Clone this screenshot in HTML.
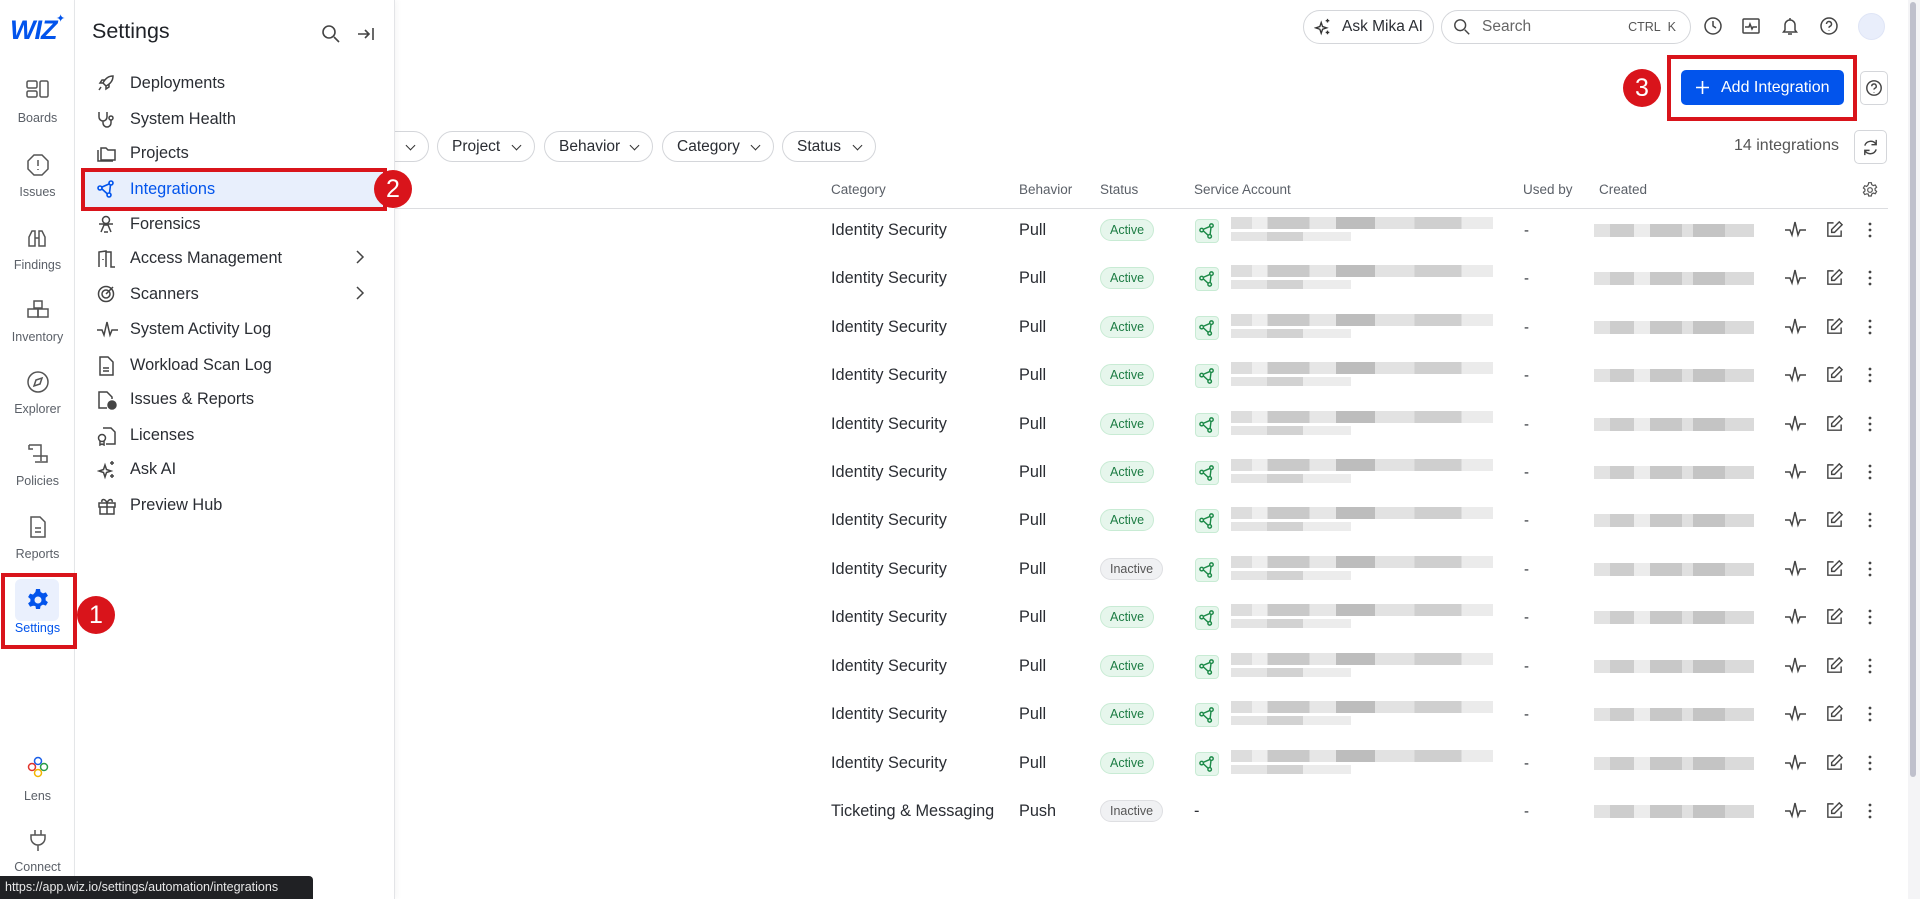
<!DOCTYPE html>
<html><head><meta charset="utf-8">
<style>
*{box-sizing:border-box;margin:0;padding:0}
body{width:1920px;height:899px;overflow:hidden;background:#fff;font-family:"Liberation Sans",sans-serif;color:#2a2d33;position:relative}
.abs{position:absolute}
.rail{left:0;top:0;width:75px;height:899px;border-right:1px solid #e6e7ea;background:#fff;z-index:5}
.ri{position:absolute;left:0;width:75px;text-align:center;font-size:12.5px;color:#5b6068}
.ri svg{display:block;margin:0 auto}
.panel{left:75px;top:0;width:320px;height:899px;background:#fff;border-right:1px solid #e3e4e7;box-shadow:2px 0 6px rgba(0,0,0,.04);z-index:5}
.mi{position:absolute;left:0;width:310px;height:36px;font-size:16.3px;color:#2a2d33;display:flex;align-items:center}
.mi svg{position:absolute;left:22px;top:9px}
.mi span{position:absolute;left:55px}
.chev{position:absolute;right:20px;top:9px}
.badge{position:absolute;width:38px;height:38px;border-radius:50%;background:#d9141b;color:#fff;font-size:25px;text-align:center;line-height:38px;font-family:"Liberation Sans",sans-serif;z-index:7}
.redbox{position:absolute;border:4px solid #d9141b;z-index:6}
.chip{position:absolute;top:131px;height:31px;border:1px solid #d4d6da;border-radius:16px;font-size:15.5px;line-height:29px;padding-left:14px;color:#2a2d33;background:#fff}
.chip:after{content:"";position:absolute;right:14px;top:10px;width:6px;height:6px;border-right:1.6px solid #333;border-bottom:1.6px solid #333;transform:rotate(45deg)}
.th{position:absolute;top:182px;font-size:13.5px;color:#5b6068}
.row{position:absolute;left:394px;width:1500px;height:48px}
.row .c{position:absolute;top:14px;font-size:16.3px;color:#2a2d33}
.pill{position:absolute;top:12px;height:22px;border-radius:11px;font-size:12.5px;line-height:20px;padding:0 9px}
.act{background:#e6f6ec;border:1px solid #c8ebd4;color:#1c7c43}
.ina{background:#f0f1f3;border:1px solid #dedfe2;color:#555}
.sa{position:absolute;left:801px;top:12px;width:24px;height:24px;border-radius:4px;background:#e6f6ec;border:1px solid #c8ebd4}
.bl1{position:absolute;left:837px;top:10px;width:262px;height:12px;background:linear-gradient(90deg,#ddd 0 8%,#eee 8% 14%,#c9c9c9 14% 30%,#e6e6e6 30% 40%,#bdbdbd 40% 55%,#e2e2e2 55% 70%,#cfcfcf 70% 88%,#ebebeb 88%)}
.bl2{position:absolute;left:837px;top:25px;width:120px;height:9px;background:linear-gradient(90deg,#e4e4e4 0 30%,#d2d2d2 30% 60%,#ececec 60%)}
.cr{position:absolute;left:1200px;top:17px;width:160px;height:13px;background:linear-gradient(90deg,#e2e2e2 0 10%,#cdcdcd 10% 25%,#ececec 25% 35%,#c8c8c8 35% 55%,#e0e0e0 55% 62%,#c4c4c4 62% 82%,#dadada 82%)}
.dash{position:absolute;left:1130px;top:15px;font-size:15px}
.ac{position:absolute;top:13px}
</style></head><body>

<!-- left rail -->
<div class="abs rail">
 <div class="abs" style="left:10px;top:15px;font-size:27px;font-weight:bold;color:#0254ec;font-style:italic;letter-spacing:-1px">WIZ</div>
 <div class="abs" style="left:56px;top:12px;font-size:11px;color:#0254ec">✦</div>
 <div class="ri" style="top:79px"><svg width="24" height="22" viewBox="0 0 24 22" fill="none" stroke="#555" stroke-width="1.5"><rect x="1" y="2" width="10" height="7" rx="1.5"/><rect x="1" y="12" width="10" height="6" rx="1.5"/><rect x="14" y="2" width="8" height="16" rx="1.5"/></svg><div style="margin-top:10px">Boards</div></div>
 <div class="ri" style="top:153px"><svg width="24" height="24" viewBox="0 0 24 24" fill="none" stroke="#555" stroke-width="1.5"><path d="M8 2h8l6 6v8l-6 6H8l-6-6V8z"/><path d="M12 7v6M12 16v1"/></svg><div style="margin-top:8px">Issues</div></div>
 <div class="ri" style="top:226px"><svg width="24" height="24" viewBox="0 0 24 24" fill="none" stroke="#555" stroke-width="1.5"><path d="M3 20V11l3-6h3v15zM13 20V5h3l3 6v9zM9 12h4"/></svg><div style="margin-top:8px">Findings</div></div>
 <div class="ri" style="top:298px"><svg width="24" height="24" viewBox="0 0 24 24" fill="none" stroke="#555" stroke-width="1.5"><rect x="8" y="3" width="8" height="7"/><rect x="2" y="11" width="10" height="8"/><rect x="12" y="11" width="10" height="8"/></svg><div style="margin-top:8px">Inventory</div></div>
 <div class="ri" style="top:370px"><svg width="24" height="24" viewBox="0 0 24 24" fill="none" stroke="#555" stroke-width="1.5"><circle cx="12" cy="12" r="10"/><path d="M16 8l-2 6-6 2 2-6z"/></svg><div style="margin-top:8px">Explorer</div></div>
 <div class="ri" style="top:442px"><svg width="24" height="24" viewBox="0 0 24 24" fill="none" stroke="#555" stroke-width="1.5"><path d="M3 3h12v16M3 3v4h4M7 14h14v6H9"/></svg><div style="margin-top:8px">Policies</div></div>
 <div class="ri" style="top:515px"><svg width="24" height="24" viewBox="0 0 24 24" fill="none" stroke="#555" stroke-width="1.5"><path d="M5 2h9l5 5v15H5z"/><path d="M9 13h6M9 17h6"/></svg><div style="margin-top:8px">Reports</div></div>
 <div class="abs" style="left:15px;top:579px;width:44px;height:42px;border-radius:6px;background:#eaf0fd"></div>
 <div class="ri" style="top:588px;color:#0254ec"><svg width="24" height="24" viewBox="0 0 24 24"><path fill="#0254ec" d="M10 1h4l.6 3 2.4 1.4 2.9-1 2 3.4-2.3 2v2.4l2.3 2-2 3.4-2.9-1-2.4 1.4-.6 3h-4l-.6-3L7 17.8l-2.9 1-2-3.4 2.3-2v-2.4l-2.3-2 2-3.4 2.9 1L9.4 4z"/><circle cx="12" cy="12" r="3.5" fill="#eaf0fd"/></svg><div style="margin-top:9px">Settings</div></div>
 <div class="ri" style="top:756px"><svg width="24" height="24" viewBox="0 0 24 24" fill="none" stroke-width="1.5"><circle cx="12" cy="5" r="3.5" stroke="#1a5fe8"/><circle cx="6" cy="11" r="3.5" stroke="#e0342c"/><circle cx="18" cy="11" r="3.5" stroke="#2a9d48"/><circle cx="12" cy="17" r="3.5" stroke="#f3b400"/></svg><div style="margin-top:9px">Lens</div></div>
 <div class="ri" style="top:828px"><svg width="24" height="24" viewBox="0 0 24 24" fill="none" stroke="#555" stroke-width="1.5"><path d="M9 2v5M15 2v5M5 7h14v3a7 7 0 0 1-14 0zM12 17v6"/></svg><div style="margin-top:8px">Connect</div></div>
</div>
<div class="redbox" style="left:1px;top:573px;width:76px;height:76px"></div>
<div class="badge" style="left:77px;top:596px">1</div>

<!-- settings panel -->
<div class="abs panel">
 <div class="abs" style="left:17px;top:19px;font-size:21.5px;color:#1f2227">Settings</div>
 <svg class="abs" style="left:246px;top:24px" width="20" height="20" viewBox="0 0 20 20" fill="none" stroke="#444" stroke-width="1.6"><circle cx="8" cy="8" r="6"/><path d="M13 13l5 5"/></svg>
 <svg class="abs" style="left:282px;top:25px" width="18" height="18" viewBox="0 0 18 18" fill="none" stroke="#444" stroke-width="1.6"><path d="M1 9h11M8 5l4 4-4 4M16 3v12"/></svg>
 <div class="abs" style="left:8px;top:171px;width:303px;height:36px;background:#e8effc"></div>
 <div class="mi" style="top:65px"><svg width="18" height="18" viewBox="0 0 18 18" fill="none" stroke="#444" stroke-width="1.5"><path d="M16 2c-5 0-8 3-10 7l3 3c4-2 7-5 7-10zM6 9H3l2-3h3M9 12v3l3-2v-3M4 13l-2 3"/></svg><span>Deployments</span></div>
 <div class="mi" style="top:101px"><svg width="18" height="18" viewBox="0 0 18 18" fill="none" stroke="#444" stroke-width="1.5"><path d="M2 2v5a4 4 0 0 0 8 0V2M6 11v2a4 4 0 0 0 8 0v-3"/><circle cx="14" cy="8" r="2"/></svg><span>System Health</span></div>
 <div class="mi" style="top:135px"><svg width="20" height="18" viewBox="0 0 20 18" fill="none" stroke="#444" stroke-width="1.5"><path d="M4 4h5l2 2h7v10H4zM1 6v11h15"/></svg><span>Projects</span></div>
 <div class="mi" style="top:171px;color:#0254ec"><svg width="18" height="18" viewBox="0 0 18 18" fill="none" stroke="#0254ec" stroke-width="1.6"><circle cx="3" cy="8" r="2"/><circle cx="14" cy="3" r="2"/><circle cx="12" cy="15" r="2"/><path d="M5 7l7-3M5 9l5.5 5M13.5 5l-1 8"/></svg><span>Integrations</span></div>
 <div class="mi" style="top:206px"><svg width="18" height="18" viewBox="0 0 18 18" fill="none" stroke="#444" stroke-width="1.5"><circle cx="9" cy="5" r="3.5"/><path d="M2 9h14M4 17l3-7h4l3 7M7 17h4"/></svg><span>Forensics</span></div>
 <div class="mi" style="top:240px"><svg width="20" height="20" viewBox="0 0 20 20" fill="none" stroke="#444" stroke-width="1.5"><path d="M2 18V3l7-1v16M9 3h5v15h4M6 10v1"/></svg><span>Access Management</span><svg class="chev" style="left:auto" width="10" height="16" viewBox="0 0 10 16" fill="none" stroke="#444" stroke-width="1.5"><path d="M2 2l6 6-6 6"/></svg></div>
 <div class="mi" style="top:276px"><svg width="18" height="18" viewBox="0 0 18 18" fill="none" stroke="#444" stroke-width="1.5"><circle cx="9" cy="9" r="7.5"/><circle cx="9" cy="9" r="4"/><path d="M9 9l7-7"/></svg><span>Scanners</span><svg class="chev" style="left:auto" width="10" height="16" viewBox="0 0 10 16" fill="none" stroke="#444" stroke-width="1.5"><path d="M2 2l6 6-6 6"/></svg></div>
 <div class="mi" style="top:311px"><svg width="22" height="18" viewBox="0 0 22 18" fill="none" stroke="#444" stroke-width="1.5"><path d="M0 10h5l2 5 3-13 3 13 2-5h6"/></svg><span>System Activity Log</span></div>
 <div class="mi" style="top:347px"><svg width="18" height="20" viewBox="0 0 18 20" fill="none" stroke="#444" stroke-width="1.5"><path d="M3 1h8l5 5v13H3z"/><path d="M6 12h6M6 15h6"/></svg><span>Workload Scan Log</span></div>
 <div class="mi" style="top:381px"><svg width="20" height="20" viewBox="0 0 20 20" fill="none" stroke="#444" stroke-width="1.5"><path d="M10 18H2V2h8l5 5v2"/><circle cx="15" cy="15" r="4" fill="#444"/></svg><span>Issues &amp; Reports</span></div>
 <div class="mi" style="top:417px"><svg width="20" height="20" viewBox="0 0 20 20" fill="none" stroke="#444" stroke-width="1.5"><path d="M6 2h8l4 4v12H9"/><circle cx="5" cy="12" r="3.5"/><path d="M3 15v4l2-1 2 1v-4"/></svg><span>Licenses</span></div>
 <div class="mi" style="top:451px"><svg width="20" height="20" viewBox="0 0 20 20" fill="none" stroke="#444" stroke-width="1.5"><path d="M8 5l1.5 4.5L14 11l-4.5 1.5L8 17l-1.5-4.5L2 11l4.5-1.5zM15 1v4M13 3h4M15 14v4M13 16h4"/></svg><span>Ask AI</span></div>
 <div class="mi" style="top:487px"><svg width="20" height="20" viewBox="0 0 20 20" fill="none" stroke="#444" stroke-width="1.5"><rect x="2" y="7" width="16" height="4"/><path d="M3 11v7h14v-7M10 7v11M10 7c-2-5-6-4-5-1M10 7c2-5 6-4 5-1"/></svg><span>Preview Hub</span></div>
</div>
<div class="redbox" style="left:81px;top:168px;width:306px;height:43px"></div>
<div class="badge" style="left:374px;top:170px">2</div>

<!-- top bar -->
<div class="abs" style="left:1303px;top:10px;width:131px;height:34px;border:1px solid #d4d6da;border-radius:17px;font-size:15.5px;line-height:32px;padding-left:38px">Ask Mika AI</div>
<svg class="abs" style="left:1314px;top:18px" width="18" height="18" viewBox="0 0 20 20" fill="none" stroke="#333" stroke-width="1.5"><path d="M8 5l1.5 4.5L14 11l-4.5 1.5L8 17l-1.5-4.5L2 11l4.5-1.5zM15 1v4M13 3h4M15 14v4M13 16h4"/></svg>
<div class="abs" style="left:1441px;top:10px;width:250px;height:34px;border:1px solid #d4d6da;border-radius:17px;font-size:15.5px;line-height:32px;padding-left:40px;color:#666">Search<span style="position:absolute;right:14px;font-size:12.5px;color:#555">CTRL&nbsp;&nbsp;K</span></div>
<svg class="abs" style="left:1453px;top:18px" width="18" height="18" viewBox="0 0 20 20" fill="none" stroke="#444" stroke-width="1.6"><circle cx="8" cy="8" r="6"/><path d="M13 13l5 5"/></svg>
<svg class="abs" style="left:1703px;top:16px" width="20" height="20" viewBox="0 0 20 20" fill="none" stroke="#444" stroke-width="1.5"><circle cx="10" cy="10" r="8"/><path d="M10 5v5l3 2"/></svg>
<svg class="abs" style="left:1741px;top:16px" width="20" height="20" viewBox="0 0 20 20" fill="none" stroke="#444" stroke-width="1.5"><rect x="2" y="3" width="16" height="14" rx="1"/><path d="M4 11h4l1-3 2 5 1-2h4"/></svg>
<svg class="abs" style="left:1780px;top:16px" width="20" height="20" viewBox="0 0 20 20" fill="none" stroke="#444" stroke-width="1.5"><path d="M5 14V9a5 5 0 0 1 10 0v5l1.5 2h-13zM8 18h4M10 2v2"/></svg>
<svg class="abs" style="left:1819px;top:16px" width="20" height="20" viewBox="0 0 20 20" fill="none" stroke="#444" stroke-width="1.5"><circle cx="10" cy="10" r="8"/><path d="M7.5 8a2.5 2.5 0 1 1 3.5 2.3c-.7.3-1 .8-1 1.5M10 14.5v.5"/></svg>
<div class="abs" style="left:1858px;top:13px;width:27px;height:27px;border-radius:50%;background:#e9eefb;border:1px solid #dfe5f6"></div>

<!-- Add integration -->
<div class="abs" style="left:1681px;top:70px;width:163px;height:35px;background:#0254ec;border-radius:5px;color:#fff;font-size:16px;line-height:35px;padding-left:40px">Add Integration</div>
<svg class="abs" style="left:1695px;top:80px" width="15" height="15" viewBox="0 0 15 15" stroke="#fff" stroke-width="1.6"><path d="M7.5 1v13M1 7.5h13"/></svg>
<div class="redbox" style="left:1667px;top:55px;width:190px;height:66px"></div>
<div class="badge" style="left:1623px;top:69px">3</div>
<div class="abs" style="left:1860px;top:71px;width:28px;height:34px;border:1px solid #d4d6da;border-radius:5px"></div>
<svg class="abs" style="left:1865px;top:79px" width="18" height="18" viewBox="0 0 20 20" fill="none" stroke="#444" stroke-width="1.6"><circle cx="10" cy="10" r="8"/><path d="M7.5 8a2.5 2.5 0 1 1 3.5 2.3c-.7.3-1 .8-1 1.5M10 14.5v.5"/></svg>

<!-- filters -->
<div class="chip" style="left:300px;width:129px">Type</div>
<div class="chip" style="left:437px;width:98px">Project</div>
<div class="chip" style="left:544px;width:109px">Behavior</div>
<div class="chip" style="left:662px;width:112px">Category</div>
<div class="chip" style="left:782px;width:94px">Status</div>
<div class="abs" style="left:1734px;top:137px;font-size:16px;color:#555">14 integrations</div>
<div class="abs" style="left:1854px;top:130px;width:33px;height:34px;border:1px solid #d4d6da;border-radius:5px"></div>
<svg class="abs" style="left:1861px;top:138px" width="19" height="19" viewBox="0 0 20 20" fill="none" stroke="#444" stroke-width="1.5"><path d="M16 7a6.5 6.5 0 0 0-12 1M4 13a6.5 6.5 0 0 0 12-1M16 2v5h-5M4 18v-5h5"/></svg>

<!-- table header -->
<div class="th" style="left:831px">Category</div>
<div class="th" style="left:1019px">Behavior</div>
<div class="th" style="left:1100px">Status</div>
<div class="th" style="left:1194px">Service Account</div>
<div class="th" style="left:1523px">Used by</div>
<div class="th" style="left:1599px">Created</div>
<svg class="abs" style="left:1862px;top:182px" width="16" height="16" viewBox="0 0 24 24" fill="none" stroke="#555" stroke-width="1.8"><path d="M10 1h4l.6 3 2.4 1.4 2.9-1 2 3.4-2.3 2v2.4l2.3 2-2 3.4-2.9-1-2.4 1.4-.6 3h-4l-.6-3L7 17.8l-2.9 1-2-3.4 2.3-2v-2.4l-2.3-2 2-3.4 2.9 1L9.4 4z"/><circle cx="12" cy="12" r="3.5"/></svg>
<div class="abs" style="left:395px;top:208px;width:1493px;height:1px;background:#dcdde0"></div>

<!-- rows -->
<svg width="0" height="0" style="position:absolute"><defs>
<symbol id="sa" viewBox="0 0 18 18"><g fill="none" stroke="#1c8a48" stroke-width="1.6"><circle cx="3" cy="8" r="2"/><circle cx="14" cy="3" r="2"/><circle cx="12" cy="15" r="2"/><path d="M5 7l7-3M5 9l5.5 5M13.5 5l-1 8"/></g></symbol>
<symbol id="pl" viewBox="0 0 22 18"><path fill="none" stroke="#444" stroke-width="1.5" d="M0 10h5l2 5 3-13 3 13 2-5h6"/></symbol>
<symbol id="ed" viewBox="0 0 20 20"><g fill="none" stroke="#444" stroke-width="1.5"><path d="M9 3H3v14h14v-6"/><path d="M15 2l3 3-8 8H7v-3z"/></g></symbol>
<symbol id="dt" viewBox="0 0 6 20"><g fill="#444"><circle cx="3" cy="4" r="1.4"/><circle cx="3" cy="10" r="1.4"/><circle cx="3" cy="16" r="1.4"/></g></symbol>
</defs></svg>

<div class="row" style="top:207px"><div class="c" style="left:437px">Identity Security</div><div class="c" style="left:625px">Pull</div><div class="pill act" style="left:706px">Active</div><div class="sa"><svg width="16" height="16" style="margin:3px"><use href="#sa"/></svg></div><div class="bl1"></div><div class="bl2"></div><div class="dash">-</div><div class="cr"></div><svg class="ac" style="left:1391px" width="22" height="18"><use href="#pl"/></svg><svg class="ac" style="left:1431px" width="19" height="19"><use href="#ed"/></svg><svg class="ac" style="left:1473px" width="6" height="20"><use href="#dt"/></svg></div>
<div class="row" style="top:255px"><div class="c" style="left:437px">Identity Security</div><div class="c" style="left:625px">Pull</div><div class="pill act" style="left:706px">Active</div><div class="sa"><svg width="16" height="16" style="margin:3px"><use href="#sa"/></svg></div><div class="bl1"></div><div class="bl2"></div><div class="dash">-</div><div class="cr"></div><svg class="ac" style="left:1391px" width="22" height="18"><use href="#pl"/></svg><svg class="ac" style="left:1431px" width="19" height="19"><use href="#ed"/></svg><svg class="ac" style="left:1473px" width="6" height="20"><use href="#dt"/></svg></div>
<div class="row" style="top:304px"><div class="c" style="left:437px">Identity Security</div><div class="c" style="left:625px">Pull</div><div class="pill act" style="left:706px">Active</div><div class="sa"><svg width="16" height="16" style="margin:3px"><use href="#sa"/></svg></div><div class="bl1"></div><div class="bl2"></div><div class="dash">-</div><div class="cr"></div><svg class="ac" style="left:1391px" width="22" height="18"><use href="#pl"/></svg><svg class="ac" style="left:1431px" width="19" height="19"><use href="#ed"/></svg><svg class="ac" style="left:1473px" width="6" height="20"><use href="#dt"/></svg></div>
<div class="row" style="top:352px"><div class="c" style="left:437px">Identity Security</div><div class="c" style="left:625px">Pull</div><div class="pill act" style="left:706px">Active</div><div class="sa"><svg width="16" height="16" style="margin:3px"><use href="#sa"/></svg></div><div class="bl1"></div><div class="bl2"></div><div class="dash">-</div><div class="cr"></div><svg class="ac" style="left:1391px" width="22" height="18"><use href="#pl"/></svg><svg class="ac" style="left:1431px" width="19" height="19"><use href="#ed"/></svg><svg class="ac" style="left:1473px" width="6" height="20"><use href="#dt"/></svg></div>
<div class="row" style="top:401px"><div class="c" style="left:437px">Identity Security</div><div class="c" style="left:625px">Pull</div><div class="pill act" style="left:706px">Active</div><div class="sa"><svg width="16" height="16" style="margin:3px"><use href="#sa"/></svg></div><div class="bl1"></div><div class="bl2"></div><div class="dash">-</div><div class="cr"></div><svg class="ac" style="left:1391px" width="22" height="18"><use href="#pl"/></svg><svg class="ac" style="left:1431px" width="19" height="19"><use href="#ed"/></svg><svg class="ac" style="left:1473px" width="6" height="20"><use href="#dt"/></svg></div>
<div class="row" style="top:449px"><div class="c" style="left:437px">Identity Security</div><div class="c" style="left:625px">Pull</div><div class="pill act" style="left:706px">Active</div><div class="sa"><svg width="16" height="16" style="margin:3px"><use href="#sa"/></svg></div><div class="bl1"></div><div class="bl2"></div><div class="dash">-</div><div class="cr"></div><svg class="ac" style="left:1391px" width="22" height="18"><use href="#pl"/></svg><svg class="ac" style="left:1431px" width="19" height="19"><use href="#ed"/></svg><svg class="ac" style="left:1473px" width="6" height="20"><use href="#dt"/></svg></div>
<div class="row" style="top:497px"><div class="c" style="left:437px">Identity Security</div><div class="c" style="left:625px">Pull</div><div class="pill act" style="left:706px">Active</div><div class="sa"><svg width="16" height="16" style="margin:3px"><use href="#sa"/></svg></div><div class="bl1"></div><div class="bl2"></div><div class="dash">-</div><div class="cr"></div><svg class="ac" style="left:1391px" width="22" height="18"><use href="#pl"/></svg><svg class="ac" style="left:1431px" width="19" height="19"><use href="#ed"/></svg><svg class="ac" style="left:1473px" width="6" height="20"><use href="#dt"/></svg></div>
<div class="row" style="top:546px"><div class="c" style="left:437px">Identity Security</div><div class="c" style="left:625px">Pull</div><div class="pill ina" style="left:706px">Inactive</div><div class="sa"><svg width="16" height="16" style="margin:3px"><use href="#sa"/></svg></div><div class="bl1"></div><div class="bl2"></div><div class="dash">-</div><div class="cr"></div><svg class="ac" style="left:1391px" width="22" height="18"><use href="#pl"/></svg><svg class="ac" style="left:1431px" width="19" height="19"><use href="#ed"/></svg><svg class="ac" style="left:1473px" width="6" height="20"><use href="#dt"/></svg></div>
<div class="row" style="top:594px"><div class="c" style="left:437px">Identity Security</div><div class="c" style="left:625px">Pull</div><div class="pill act" style="left:706px">Active</div><div class="sa"><svg width="16" height="16" style="margin:3px"><use href="#sa"/></svg></div><div class="bl1"></div><div class="bl2"></div><div class="dash">-</div><div class="cr"></div><svg class="ac" style="left:1391px" width="22" height="18"><use href="#pl"/></svg><svg class="ac" style="left:1431px" width="19" height="19"><use href="#ed"/></svg><svg class="ac" style="left:1473px" width="6" height="20"><use href="#dt"/></svg></div>
<div class="row" style="top:643px"><div class="c" style="left:437px">Identity Security</div><div class="c" style="left:625px">Pull</div><div class="pill act" style="left:706px">Active</div><div class="sa"><svg width="16" height="16" style="margin:3px"><use href="#sa"/></svg></div><div class="bl1"></div><div class="bl2"></div><div class="dash">-</div><div class="cr"></div><svg class="ac" style="left:1391px" width="22" height="18"><use href="#pl"/></svg><svg class="ac" style="left:1431px" width="19" height="19"><use href="#ed"/></svg><svg class="ac" style="left:1473px" width="6" height="20"><use href="#dt"/></svg></div>
<div class="row" style="top:691px"><div class="c" style="left:437px">Identity Security</div><div class="c" style="left:625px">Pull</div><div class="pill act" style="left:706px">Active</div><div class="sa"><svg width="16" height="16" style="margin:3px"><use href="#sa"/></svg></div><div class="bl1"></div><div class="bl2"></div><div class="dash">-</div><div class="cr"></div><svg class="ac" style="left:1391px" width="22" height="18"><use href="#pl"/></svg><svg class="ac" style="left:1431px" width="19" height="19"><use href="#ed"/></svg><svg class="ac" style="left:1473px" width="6" height="20"><use href="#dt"/></svg></div>
<div class="row" style="top:740px"><div class="c" style="left:437px">Identity Security</div><div class="c" style="left:625px">Pull</div><div class="pill act" style="left:706px">Active</div><div class="sa"><svg width="16" height="16" style="margin:3px"><use href="#sa"/></svg></div><div class="bl1"></div><div class="bl2"></div><div class="dash">-</div><div class="cr"></div><svg class="ac" style="left:1391px" width="22" height="18"><use href="#pl"/></svg><svg class="ac" style="left:1431px" width="19" height="19"><use href="#ed"/></svg><svg class="ac" style="left:1473px" width="6" height="20"><use href="#dt"/></svg></div>
<div class="row" style="top:788px"><div class="c" style="left:437px">Ticketing &amp; Messaging</div><div class="c" style="left:625px">Push</div><div class="pill ina" style="left:706px">Inactive</div><div class="c" style="left:800px">-</div><div class="dash">-</div><div class="cr"></div><svg class="ac" style="left:1391px" width="22" height="18"><use href="#pl"/></svg><svg class="ac" style="left:1431px" width="19" height="19"><use href="#ed"/></svg><svg class="ac" style="left:1473px" width="6" height="20"><use href="#dt"/></svg></div>

<!-- scrollbar -->
<div class="abs" style="left:1908px;top:0;width:12px;height:899px;background:#f4f4f6"></div>
<div class="abs" style="left:1910px;top:2px;width:6px;height:775px;background:#bfc0cc;border-radius:3px"></div>

<!-- url tooltip -->
<div class="abs" style="left:0;top:876px;width:313px;height:23px;background:#202124;color:#e8e8e8;font-size:12.5px;line-height:22px;padding-left:5px;border-top-right-radius:4px;z-index:9">https://app.wiz.io/settings/automation/integrations</div>
</body></html>
